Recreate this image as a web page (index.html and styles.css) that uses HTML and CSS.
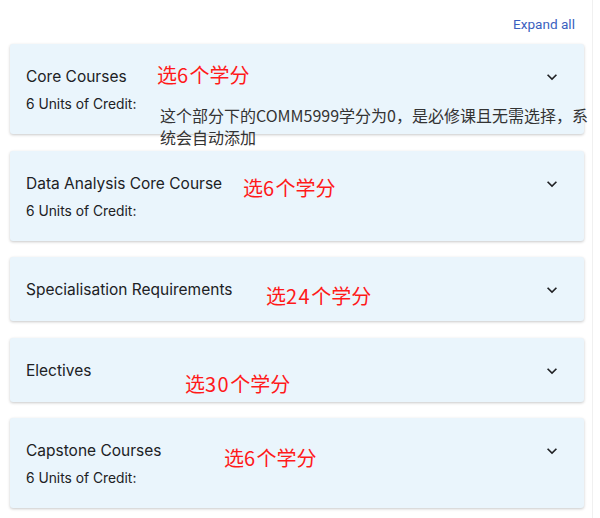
FILE: index.html
```html
<!DOCTYPE html>
<html lang="zh">
<head>
<meta charset="utf-8">
<link rel="stylesheet" href="styles.css">
</head>
<body>
<div class="page">
  <div class="toolbar"><a class="expand">Expand all</a></div>
  <div class="list">
    <div class="card">
      <div class="head">
        <div class="text">
          <div class="title">Core Courses</div>
          <div class="sub">6 Units of Credit:</div>
        </div>
        <svg class="chev" viewBox="0 0 24 24"><path d="M16.59 8.59L12 13.17 7.41 8.59 6 10l6 6 6-6z"/></svg>
      </div>
      <span class="note n1">选<span class="num">6</span>个学分</span>
      <span class="memo">这个部分下的COMM5999学分为0，是必修课且无需选择，系统会自动添加</span>
    </div>
    <div class="card">
      <div class="head">
        <div class="text">
          <div class="title">Data Analysis Core Course</div>
          <div class="sub">6 Units of Credit:</div>
        </div>
        <svg class="chev" viewBox="0 0 24 24"><path d="M16.59 8.59L12 13.17 7.41 8.59 6 10l6 6 6-6z"/></svg>
      </div>
      <span class="note n2">选<span class="num">6</span>个学分</span>
    </div>
    <div class="card">
      <div class="head">
        <div class="text">
          <div class="title">Specialisation Requirements</div>
        </div>
        <svg class="chev" viewBox="0 0 24 24"><path d="M16.59 8.59L12 13.17 7.41 8.59 6 10l6 6 6-6z"/></svg>
      </div>
      <span class="note n3">选<span class="num">24</span>个学分</span>
    </div>
    <div class="card">
      <div class="head">
        <div class="text">
          <div class="title">Electives</div>
        </div>
        <svg class="chev" viewBox="0 0 24 24"><path d="M16.59 8.59L12 13.17 7.41 8.59 6 10l6 6 6-6z"/></svg>
      </div>
      <span class="note n4">选<span class="num">30</span>个学分</span>
    </div>
    <div class="card">
      <div class="head">
        <div class="text">
          <div class="title">Capstone Courses</div>
          <div class="sub">6 Units of Credit:</div>
        </div>
        <svg class="chev" viewBox="0 0 24 24"><path d="M16.59 8.59L12 13.17 7.41 8.59 6 10l6 6 6-6z"/></svg>
      </div>
      <span class="note n5">选<span class="num">6</span>个学分</span>
    </div>
  </div>
</div>
</body>
</html>
```

FILE: styles.css
```css
html, body {
  margin: 0;
  padding: 0;
  background: #fff;
}
body {
  font-family: Inter, Roboto, "Noto Sans CJK SC", sans-serif;
  color: #202124;
}
.page {
  width: 574px;
  height: 518px;
  padding: 0 8px 0 10px;
  border-right: 1px solid #f0f0f0;
  overflow: hidden;
}
.toolbar {
  height: 44px;
  display: flex;
  justify-content: flex-end;
  align-items: flex-start;
  padding-right: 9px;
}
.expand {
  margin-top: 15px;
  font-family: Roboto, sans-serif;
  font-size: 13.6px;
  line-height: 18px;
  color: #3b5fc0;
  cursor: pointer;
}
.list {
  display: flex;
  flex-direction: column;
  gap: 16.5px;
}
.card {
  position: relative;
  background: #eaf5fc;
  border-radius: 3px;
  box-shadow: 0 1px 3px rgba(0,0,0,0.22);
  padding: 23px 16px 21px 16px;
}
.head {
  display: flex;
  justify-content: space-between;
  align-items: flex-start;
}
.text {
  display: flex;
  flex-direction: column;
  gap: 9px;
}
.title {
  font-size: 15.5px;
  line-height: 20px;
  color: #202124;
}
.sub {
  font-size: 13.8px;
  line-height: 17px;
  color: #202124;
}
.chev {
  width: 20px;
  height: 20px;
  margin-right: 6px;
  fill: #202124;
}
.note {
  position: absolute;
  font-family: "Noto Sans CJK SC", sans-serif;
  font-size: 20px;
  line-height: 24px;
  color: #ff1a1a;
  white-space: nowrap;
}
.num {
  letter-spacing: 1.5px;
}
.n1 { left: 147px; top: 19px; }
.n2 { left: 233px; top: 25px; }
.n3 { left: 256px; top: 27px; }
.n4 { left: 175px; top: 34px; }
.n5 { left: 214px; top: 28px; }
.memo {
  position: absolute;
  left: 150px;
  top: 60px;
  width: 434px;
  font-family: "Noto Sans CJK SC", sans-serif;
  font-size: 16px;
  line-height: 22px;
  color: #333;
}
```
